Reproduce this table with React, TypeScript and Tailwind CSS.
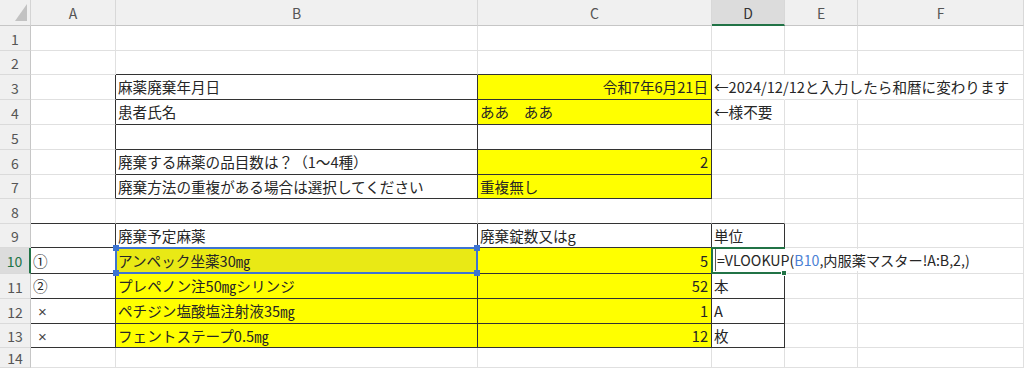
import React from 'react';
import clsx from 'clsx';

type CellData = {
  text?: React.ReactNode;
  align?: 'left' | 'right';
  fill?: 'yellow' | 'picked';
};

const COLS = ['A', 'B', 'C', 'D', 'E', 'F'];
const ROW_COUNT = 14;

// cells that carry a thin black box on all four sides
const BOXED = new Set<string>([
  'B3', 'C3', 'B4', 'C4', 'B5', 'C5', 'B6', 'C6', 'B7', 'C7',
  'A9', 'B9', 'C9', 'D9',
  'A10', 'B10', 'C10', 'D10',
  'A11', 'B11', 'C11', 'D11',
  'A12', 'B12', 'C12', 'D12',
  'A13', 'B13', 'C13', 'D13',
]);

// long text in D3 runs across E and into F, hiding those gridlines
const NO_RIGHT_LINE = new Set<string>(['D3', 'E3']);

const Cross = () => (
  <span className="pl-[5px] font-['Liberation_Sans',sans-serif] text-[15px] text-[#444444]">×</span>
);

const CELLS: Record<string, CellData> = {
  B3: { text: '麻薬廃棄年月日' },
  C3: { text: '令和7年6月21日', align: 'right', fill: 'yellow' },
  D3: { text: '←2024/12/12と入力したら和暦に変わります' },
  B4: { text: '患者氏名' },
  C4: { text: 'ああ　ああ', fill: 'yellow' },
  D4: { text: '←様不要' },
  B6: { text: '廃棄する麻薬の品目数は？（1～4種）' },
  C6: { text: '2', align: 'right', fill: 'yellow' },
  B7: { text: '廃棄方法の重複がある場合は選択してください' },
  C7: { text: '重複無し', fill: 'yellow' },
  B9: { text: '廃棄予定麻薬' },
  C9: { text: '廃棄錠数又はg' },
  D9: { text: '単位' },
  A10: { text: '①' },
  B10: { text: 'アンペック坐薬30㎎', fill: 'picked' },
  C10: { text: '5', align: 'right', fill: 'yellow' },
  A11: { text: '②' },
  B11: { text: 'プレペノン注50㎎シリンジ', fill: 'yellow' },
  C11: { text: '52', align: 'right', fill: 'yellow' },
  D11: { text: '本' },
  A12: { text: <Cross /> },
  B12: { text: 'ペチジン塩酸塩注射液35㎎', fill: 'yellow' },
  C12: { text: '1', align: 'right', fill: 'yellow' },
  D12: { text: 'A' },
  A13: { text: <Cross /> },
  B13: { text: 'フェントステープ0.5㎎', fill: 'yellow' },
  C13: { text: '12', align: 'right', fill: 'yellow' },
  D13: { text: '枚' },
};

const isBoxed = (row: number, col: number) =>
  col >= 0 && col < COLS.length && BOXED.has(COLS[col] + row);

// blue outline Excel draws around a range referenced by the formula being typed
const ReferenceBox: React.FC = () => (
  <div className="pointer-events-none absolute -left-[1px] -top-[1px] -right-[1px] -bottom-[1px] z-20 border-2 border-[#3d74d1]">
    <span className="absolute -left-[4px] -top-[4px] h-[6px] w-[6px] bg-[#3d74d1]" />
    <span className="absolute -right-[4px] -top-[4px] h-[6px] w-[6px] bg-[#3d74d1]" />
    <span className="absolute -left-[4px] -bottom-[4px] h-[6px] w-[6px] bg-[#3d74d1]" />
    <span className="absolute -right-[4px] -bottom-[4px] h-[6px] w-[6px] bg-[#3d74d1]" />
  </div>
);

// active cell in edit mode: green frame plus the formula spilling to the right
const FormulaEditor: React.FC = () => (
  <>
    <div className="pointer-events-none absolute -left-[1px] -top-[1px] -right-[1px] -bottom-[1px] z-20 border-2 border-[#217346]">
      <span className="absolute -right-[4px] -bottom-[4px] h-[6px] w-[6px] border border-white bg-[#217346]" />
    </div>
    <div className="absolute left-[1px] top-[1px] bottom-[2px] z-30 flex w-[274px] items-center bg-white pl-[2px] text-[14.2px] leading-none whitespace-nowrap">
      <span className="mr-[1px] h-full w-[1px] bg-[#5a5a5a]" />
      <span>=VLOOKUP(</span>
      <span className="text-[#4a7fd4]">B10</span>
      <span>,内服薬マスター!A:B,2,)</span>
    </div>
  </>
);

const SheetCell: React.FC<{ row: number; col: number }> = ({ row, col }) => {
  const id = COLS[col] + row;
  const cell = CELLS[id];
  const rightDark = isBoxed(row, col) || isBoxed(row, col + 1);
  const bottomDark = isBoxed(row, col) || isBoxed(row + 1, col);

  return (
    <div
      className={clsx(
        'relative flex items-center border-r border-b pt-[1px] leading-none whitespace-nowrap',
        NO_RIGHT_LINE.has(id)
          ? 'border-r-transparent'
          : rightDark
            ? 'border-r-[#333333]'
            : 'border-r-[#e0e0e0]',
        bottomDark ? 'border-b-[#333333]' : 'border-b-[#e0e0e0]',
        cell?.align === 'right' ? 'justify-end pr-[3px]' : 'pl-[2px]',
        cell?.fill === 'yellow' && 'bg-[#ffff00]',
        cell?.fill === 'picked' && 'bg-[#e9e915]'
      )}
    >
      {cell?.text}
      {id === 'B10' && <ReferenceBox />}
      {id === 'D10' && <FormulaEditor />}
    </div>
  );
};

const App: React.FC = () => {
  const rows = Array.from({ length: ROW_COUNT }, (_, i) => i + 1);

  return (
    <div className="h-[368px] w-[1024px] overflow-hidden bg-white font-['Noto_Sans_CJK_JP',sans-serif] text-[14.6px] text-[#262626]">
      <div className="grid grid-cols-[31px_85px_362px_234px_73px_73px_1fr] grid-rows-[26px_25px_24px_25px_25px_25px_25px_24px_25px_24px_26px_25px_25px_24px_20px]">
        {/* select-all corner */}
        <div className="flex items-end justify-end border-r border-b border-r-[#d4d4d4] border-b-[#c6c6c6] bg-[#f0f0f0] pr-[3px] pb-[4px]">
          <svg width="12" height="17" viewBox="0 0 12 17">
            <polygon points="0,17 12,17 12,0" fill="#c2c2c2" />
          </svg>
        </div>

        {/* column letters */}
        {COLS.map((col) => (
          <div
            key={col}
            className={clsx(
              'flex items-center justify-center border-r border-b border-r-[#d8d8d8] pt-[1px] text-[14px] leading-none',
              col === 'D'
                ? 'border-b-2 border-b-[#217346] bg-[#dcdcdc] text-[#333333]'
                : 'border-b-[#c6c6c6] bg-[#f0f0f0] text-[#555555]'
            )}
          >
            {col}
          </div>
        ))}

        {rows.map((row) => (
          <React.Fragment key={row}>
            <div
              className={clsx(
                'flex items-center justify-center border-b border-b-[#dadada] pt-[1px] text-[14px] leading-none',
                row === 10
                  ? 'border-r-2 border-r-[#217346] bg-[#dcdcdc] text-[#217346]'
                  : 'border-r border-r-[#c6c6c6] bg-[#f0f0f0] text-[#555555]'
              )}
            >
              {row}
            </div>
            {COLS.map((_, col) => (
              <SheetCell key={col} row={row} col={col} />
            ))}
          </React.Fragment>
        ))}
      </div>
    </div>
  );
};

export default App;
